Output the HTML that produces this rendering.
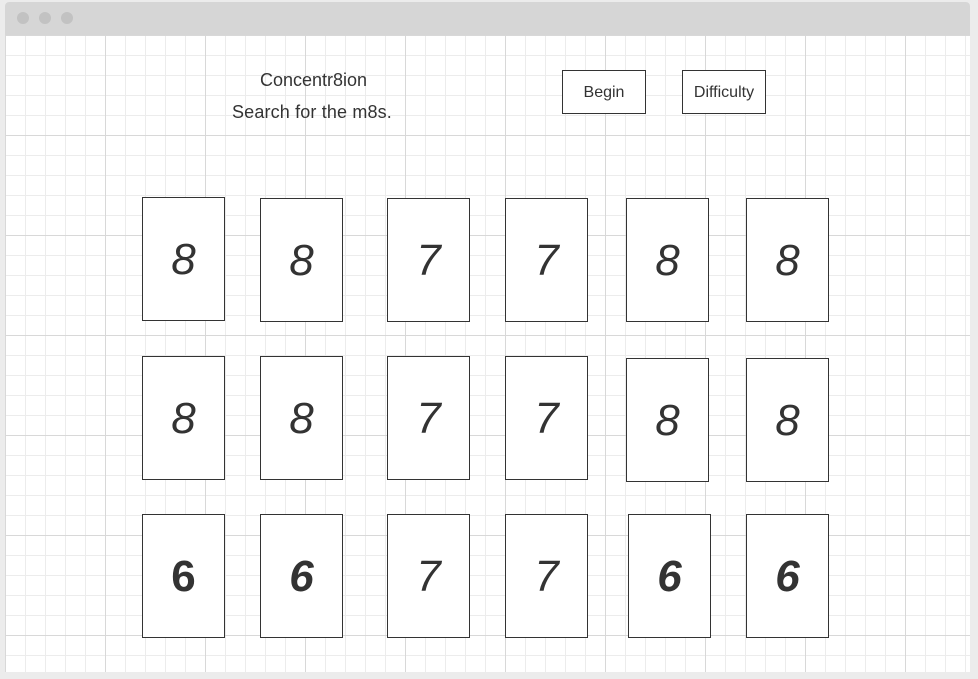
<html><head><style>
body{margin:0;width:978px;height:679px;background:#ececec;position:relative;overflow:hidden;font-family:"Liberation Sans",sans-serif;color:#333}
.win{position:absolute;left:5px;top:2px;width:965px;height:670px;background:#fff;border-radius:4px 4px 0 0;overflow:hidden}
.bar{position:absolute;left:0;top:0;width:100%;height:33px;background:#d6d6d6}
.dot{position:absolute;top:10px;width:12px;height:12px;border-radius:50%;background:#c2c2c2}
.grid{position:absolute;left:0;top:33px;right:0;bottom:0;
background-image:linear-gradient(#d8d8d8 1px,transparent 1px),linear-gradient(90deg,#d8d8d8 1px,transparent 1px),linear-gradient(#ececec 1px,transparent 1px),linear-gradient(90deg,#ececec 1px,transparent 1px);
background-size:100px 100px,100px 100px,20px 20px,20px 20px;background-position:0 0,0 0,0 0,0 0}
.t{position:absolute;font-size:18px;white-space:nowrap}
.btn{position:absolute;width:82px;height:42px;border:1px solid #333;background:#fff;font-size:16px;display:flex;align-items:center;justify-content:center;padding-top:1px;box-sizing:content-box}
.c{position:absolute;width:81px;height:122px;border:1px solid #333;background:#fff;display:flex;align-items:center;justify-content:center;font-size:44px;font-style:italic;padding-top:2px;height:120px}
.b{font-weight:bold}
</style></head><body>
<div class="win"><div class="bar"><div class="dot" style="left:12px"></div><div class="dot" style="left:34px"></div><div class="dot" style="left:56px"></div></div><div class="grid"></div></div>
<div class="t" style="left:260px;top:70px">Concentr8ion</div>
<div class="t" style="left:232px;top:102px;letter-spacing:0.15px">Search for the m8s.</div>
<div class="btn" style="left:562px;top:70px;height:41px">Begin</div>
<div class="btn" style="left:682px;top:70px;height:41px">Difficulty</div>
<div class="c" style="left:142px;top:197px">8</div>
<div class="c" style="left:260px;top:198px">8</div>
<div class="c" style="left:387px;top:198px">7</div>
<div class="c" style="left:505px;top:198px">7</div>
<div class="c" style="left:626px;top:198px">8</div>
<div class="c" style="left:746px;top:198px">8</div>
<div class="c" style="left:142px;top:356px">8</div>
<div class="c" style="left:260px;top:356px">8</div>
<div class="c" style="left:387px;top:356px">7</div>
<div class="c" style="left:505px;top:356px">7</div>
<div class="c" style="left:626px;top:358px">8</div>
<div class="c" style="left:746px;top:358px">8</div>
<div class="c b" style="left:142px;top:514px;font-style:normal">6</div>
<div class="c b" style="left:260px;top:514px">6</div>
<div class="c" style="left:387px;top:514px">7</div>
<div class="c" style="left:505px;top:514px">7</div>
<div class="c b" style="left:628px;top:514px">6</div>
<div class="c b" style="left:746px;top:514px">6</div>
</body></html>
